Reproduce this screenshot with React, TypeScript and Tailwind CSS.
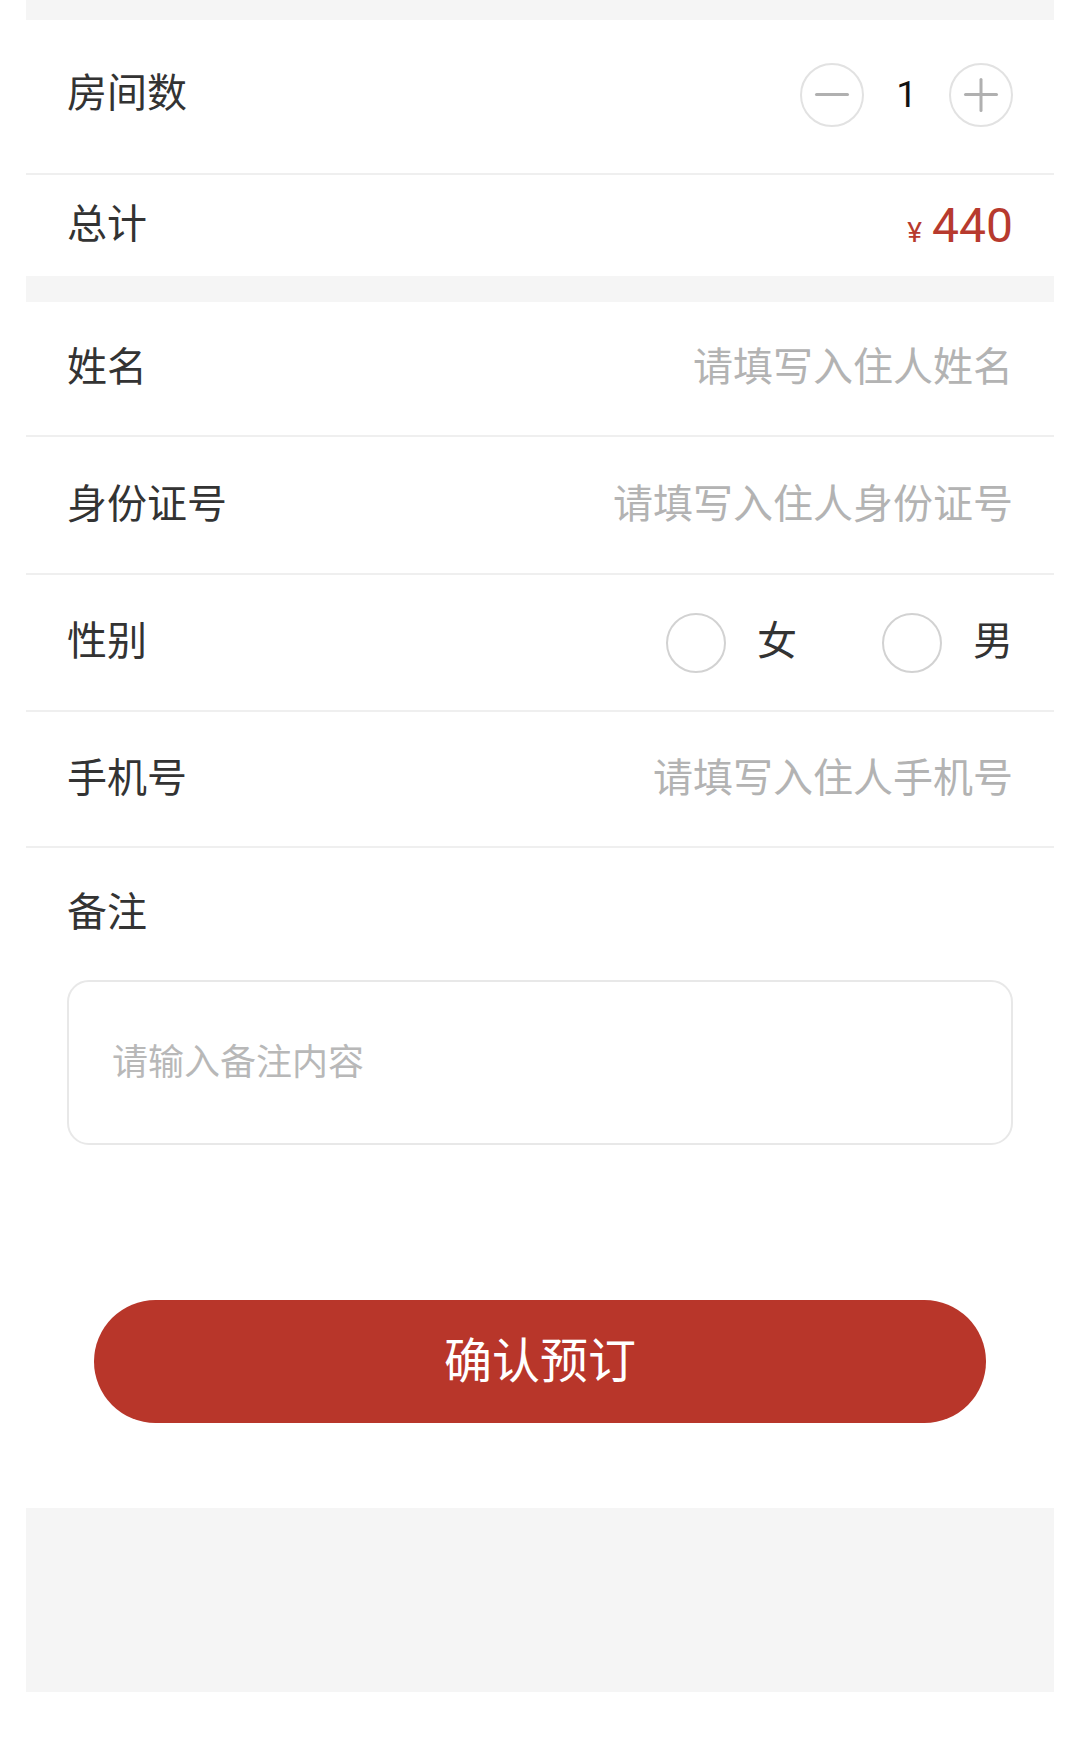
import React from "react";

const font = { fontFamily: '"Noto Sans CJK SC", "Noto Sans", sans-serif' };

function Label({ text }: { text: string }) {
  return <span className="pb-[9px] text-[40px] leading-none text-[#333333]">{text}</span>;
}

function Row({ label, children, h, border = true }: { label: string; children?: React.ReactNode; h: string; border?: boolean }) {
  return (
    <div className={`flex items-center justify-between px-[41px] ${h} ${border ? "border-b-2 border-[#efefef]" : ""}`}>
      <Label text={label} />
      {children}
    </div>
  );
}

function Placeholder({ text }: { text: string }) {
  return <span className="pb-[9px] text-[40px] leading-none text-[#b3b3b3]">{text}</span>;
}

function Radio({ label }: { label: string }) {
  return (
    <div className="flex items-center gap-[31px]">
      <span className="block h-[60px] w-[60px] shrink-0 rounded-full border-2 border-[#d2d2d2]" />
      <Label text={label} />
    </div>
  );
}

export default function App() {
  return (
    <div className="min-h-[1738px] w-[1080px] bg-white" style={font}>
      <div className="mx-[26px]">
        <div className="h-[20px] bg-[#f5f5f5]" />
        <div className="flex h-[155px] items-center justify-between border-b-2 border-[#efefef] px-[41px] pb-[4px]">
          <Label text="房间数" />
          <div className="flex items-center">
            <span className="flex h-[64px] w-[64px] items-center justify-center rounded-full border-2 border-[#e2e2e2]">
              <span className="block h-[3px] w-[34px] rounded-full bg-[#b0b0b0]" />
            </span>
            <span className="mx-[32px] text-[37px] leading-none text-[#111111]" style={{ fontFamily: "Roboto, sans-serif" }}>1</span>
            <span className="relative flex h-[64px] w-[64px] items-center justify-center rounded-full border-2 border-[#e2e2e2]">
              <span className="block h-[3px] w-[34px] rounded-full bg-[#b0b0b0]" />
              <span className="absolute left-1/2 top-1/2 block h-[34px] w-[3px] -translate-x-1/2 -translate-y-1/2 rounded-full bg-[#b0b0b0]" />
            </span>
          </div>
        </div>
        <div className="flex h-[101px] items-center justify-between px-[41px]">
          <Label text="总计" />
          <div className="flex items-baseline text-[#b73a2e]" style={{ fontFamily: "Roboto, sans-serif" }}>
            <span className="mr-[10px] text-[28px] leading-none">¥</span>
            <span className="text-[48px] leading-none">440</span>
          </div>
        </div>
        <div className="h-[26px] bg-[#f5f5f5]" />
        <Row label="姓名" h="h-[135px]">
          <Placeholder text="请填写入住人姓名" />
        </Row>
        <Row label="身份证号" h="h-[138px]">
          <Placeholder text="请填写入住人身份证号" />
        </Row>
        <Row label="性别" h="h-[137px]">
          <div className="flex items-center gap-[85px]">
            <Radio label="女" />
            <Radio label="男" />
          </div>
        </Row>
        <Row label="手机号" h="h-[136px]">
          <Placeholder text="请填写入住人手机号" />
        </Row>
        <div className="px-[41px] pt-[41px]">
          <div className="text-[40px] leading-none text-[#333333]">备注</div>
          <div className="mt-[51px] flex h-[165px] items-center rounded-[22px] border-2 border-[#e8e8e8] px-[43px]">
            <span className="pb-[8px] text-[36px] leading-none text-[#b8b8b8]">请输入备注内容</span>
          </div>
        </div>
        <div className="mt-[155px] flex justify-center">
          <button className="flex h-[123px] w-[892px] items-center justify-center rounded-full bg-[#b8362a] pb-[10px] text-[48px] font-normal leading-none text-white">
            确认预订
          </button>
        </div>
        <div className="mt-[85px] h-[184px] bg-[#f5f5f5]" />
      </div>
    </div>
  );
}
